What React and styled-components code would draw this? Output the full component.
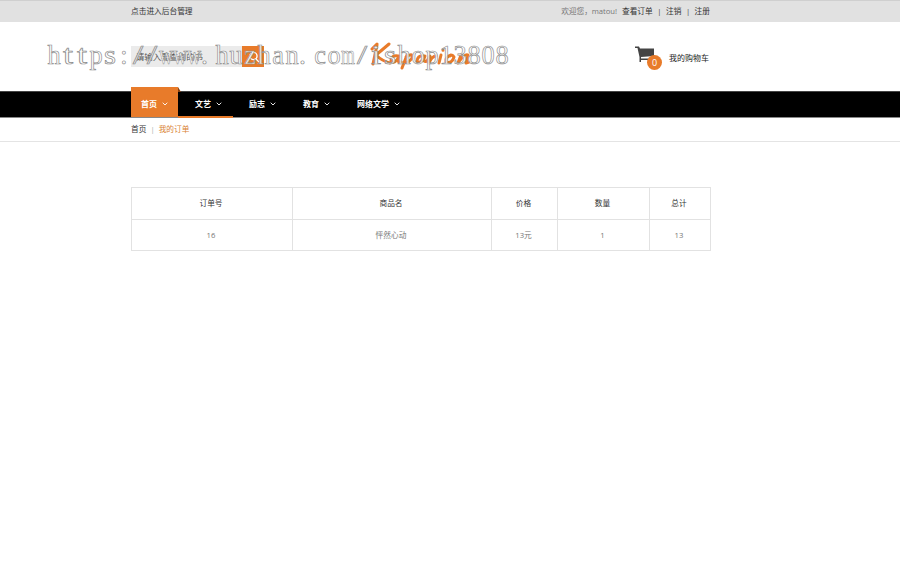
import styled, { createGlobalStyle } from "styled-components";

const GlobalStyle = createGlobalStyle`
  * {
    box-sizing: border-box;
  }

  body {
    margin: 0;
    background: #fff;
    color: #333;
    font-family: "Open Sans", "Noto Sans CJK SC", sans-serif;
    font-size: 7.7px;
    line-height: 12px;
  }
`;

const Container = styled.div`
  width: 579px;
  margin-left: 131px;
  display: flex;
  align-items: center;
`;

const TopBar = styled.div`
  height: 22px;
  background: #e1e1e1;
  border-top: 1px solid #cfcfcf;

  ${Container} {
    height: 19px;
    justify-content: space-between;
  }
`;

const TopLink = styled.a`
  color: #333;
`;

const Account = styled.div`
  display: flex;
  color: #777;
  white-space: pre;
`;

const Greeting = styled.span`
  margin-right: 5px;
  letter-spacing: -0.05px;
`;

const Divider = styled.span`
  margin: 0 ${(props) => props.$space || 4.5}px;
  color: ${(props) => props.$color || "#444"};
`;

const Masthead = styled.header`
  position: relative;
  height: 70px;

  ${Container} {
    height: 69px;
  }
`;

const SearchBox = styled.div`
  display: flex;
  width: 133px;
  height: 21px;
  background: #ebebeb;
`;

const SearchText = styled.span`
  flex: 1;
  padding-left: 5px;
  font-size: 8.4px;
  line-height: 21px;
  color: #555;
`;

const SearchButton = styled.button`
  width: 22px;
  height: 21px;
  padding: 0;
  border: 0;
  background: #e87b2a;
`;

const Logo = styled.svg`
  width: 102px;
  height: 30px;
  margin: -2px 0 0 106px;
`;

const Cart = styled.div`
  display: flex;
  align-items: center;
  margin-left: auto;
  padding: 2px 1px 0 0;
  color: #222;
  font-size: 8px;
`;

const CartIcon = styled.div`
  position: relative;
  width: 20px;
  height: 17px;
  margin: -7px 14px 0 0;

  svg {
    display: block;
  }
`;

const Badge = styled.span`
  position: absolute;
  left: 12px;
  top: 9px;
  width: 15px;
  height: 15px;
  border-radius: 50%;
  background: #e87b2a;
  color: #fff;
  font-size: 9px;
  line-height: 15px;
  text-align: center;
`;

const Watermark = styled.div`
  position: absolute;
  left: 47px;
  top: 17px;
  display: flex;
  font-family: "Liberation Serif", serif;
  font-size: 28px;
  line-height: 32px;
  color: rgba(255, 255, 255, 0.85);
  -webkit-text-stroke: 0.7px #8c8c8c;
`;

const Letter = styled.span`
  display: flex;
  justify-content: ${(props) => (props.$start ? "flex-start" : "center")};
  width: 14px;
  transform: scaleX(${(props) => props.$stretch});
`;

const NavBar = styled.nav`
  height: 25px;
  background: #000;
  box-shadow: 0 -1px 0 #444, 0 1px 0 #888;

  ${Container} {
    height: 25px;
    align-items: flex-end;
  }
`;

const NavItem = styled.a`
  position: relative;
  display: flex;
  align-items: center;
  gap: 5px;
  height: ${(props) => (props.$active ? 30 : 25)}px;
  padding: ${(props) => (props.$active ? "4px 10px 0" : "0 10px 1px")};
  margin-right: 7px;
  background: ${(props) => (props.$active ? "#e87b2a" : "transparent")};
  color: #fff;
  font-size: 8px;
  font-weight: 700;
  white-space: nowrap;
`;

const Fold = styled.svg`
  position: absolute;
  left: 100%;
  top: 0;
`;

const Underline = styled.span`
  position: absolute;
  left: -7px;
  right: -1px;
  bottom: -1px;
  height: 2px;
  background: #e87b2a;
`;

const Breadcrumb = styled.div`
  height: 25px;
  border-bottom: 1px solid #e4e4e4;

  ${Container} {
    height: 23px;
  }
`;

const Current = styled.span`
  color: #d98232;
`;

const OrderTable = styled.table`
  width: 579px;
  margin: 45px 0 0 130.5px;
  border-collapse: collapse;
  table-layout: fixed;
`;

const Cell = styled.td`
  height: 31px;
  padding: 0 1px 1px 0;
  border: 1px solid #e2e2e2;
  color: #777;
  font-size: 7.7px;
  text-align: center;
`;

const HeadCell = styled(Cell)`
  height: 32px;
  color: #333;
  font-weight: 400;
`;

const menu = ["首页", "文艺", "励志", "教育", "网络文学"];
const widths = [161, 199, 66, 92, 61];
const headings = ["订单号", "商品名", "价格", "数量", "总计"];
const order = ["16", "怦然心动", "13元", "1", "13"];
const watermark = "https://www.huzhan.com/ishop13808";

// Serif letters squeezed or widened to share one fixed column width
const stretch = { w: 0.7, m: 0.64, t: 1.3, i: 1.3, s: 1.1, "/": 1.3, ".": 1 };

const Chevron = () => (
  <svg width="6" height="4" viewBox="0 0 6 4" fill="none" stroke="#fff" strokeWidth="0.9">
    <path d="M0.7 0.7 3 3 5.3 0.7" />
  </svg>
);

const App = () => (
  <>
    <GlobalStyle />
    <TopBar>
      <Container>
        <TopLink>点击进入后台管理</TopLink>
        <Account>
          <Greeting>欢迎您，matou!</Greeting>
          <TopLink>查看订单</TopLink>
          <Divider>|</Divider>
          <TopLink>注销</TopLink>
          <Divider>|</Divider>
          <TopLink>注册</TopLink>
        </Account>
      </Container>
    </TopBar>
    <Masthead>
      <Container>
        <SearchBox>
          <SearchText>请输入要查询的书</SearchText>
          <SearchButton aria-label="搜索">
            <svg width="22" height="21" viewBox="0 0 22 21" fill="none" stroke="#fff" strokeWidth="1.3">
              <circle cx="11.5" cy="10" r="3.6" />
              <path d="m14 13 3 3" />
            </svg>
          </SearchButton>
        </SearchBox>
        <Logo viewBox="0 0 102 30" fill="none" stroke="#e87b2a" strokeWidth="3" strokeLinecap="round" strokeLinejoin="round">
          <path d="M7 4 3 23M2 8 7 3M19 3Q12 9 6 14Q12 20 20 22" />
          <path d="M28 15Q21 14 21 20Q25 24 29 15Q26 22 31 21" />
          <path d="M37 14 32 27M36 16Q43 11 42 17Q38 23 34 21" />
          <path d="M54 15Q47 14 47 21Q51 23 55 15Q52 22 57 20L60 15 59 22Q62 15 66 15" />
          <path d="M71 14 69 22M73 9V9.2M81 14Q75 16 76 21Q82 23 84 16Q82 13 80 15M91 14 88 22Q95 12 98 14L96 22 99 21" />
        </Logo>
        <Cart>
          <CartIcon>
            <svg width="20" height="17" viewBox="0 0 20 17" fill="#444">
              <path d="M0 0.5H4L5 2.5H19V10L6 11V12.5H16V14H6V16H4.5V11L2.5 2H0Z" />
            </svg>
            <Badge>0</Badge>
          </CartIcon>
          我的购物车
        </Cart>
      </Container>
      <Watermark>
        {[...watermark].map((char, index) => (
          <Letter key={index} $start={char === "."} $stretch={stretch[char] || 0.94}>
            {char}
          </Letter>
        ))}
      </Watermark>
    </Masthead>
    <NavBar>
      <Container>
        {menu.map((label, index) => (
          <NavItem key={label} $active={index === 0}>
            {label}
            <Chevron />
            {index === 0 && (
              <Fold width="3" height="5" fill="#8a4212">
                <path d="M0 0 3 5H0Z" />
              </Fold>
            )}
            {index === 1 && <Underline />}
          </NavItem>
        ))}
      </Container>
    </NavBar>
    <Breadcrumb>
      <Container>
        <span>首页</span>
        <Divider $color="#aaa" $space={4}>
          |
        </Divider>
        <Current>我的订单</Current>
      </Container>
    </Breadcrumb>
    <OrderTable>
      <colgroup>
        {widths.map((width) => (
          <col key={width} width={width} />
        ))}
      </colgroup>
      <tbody>
        <tr>
          {headings.map((text) => (
            <HeadCell as="th" key={text}>
              {text}
            </HeadCell>
          ))}
        </tr>
        <tr>
          {order.map((text, index) => (
            <Cell key={index}>{text}</Cell>
          ))}
        </tr>
      </tbody>
    </OrderTable>
  </>
);

export default App;
